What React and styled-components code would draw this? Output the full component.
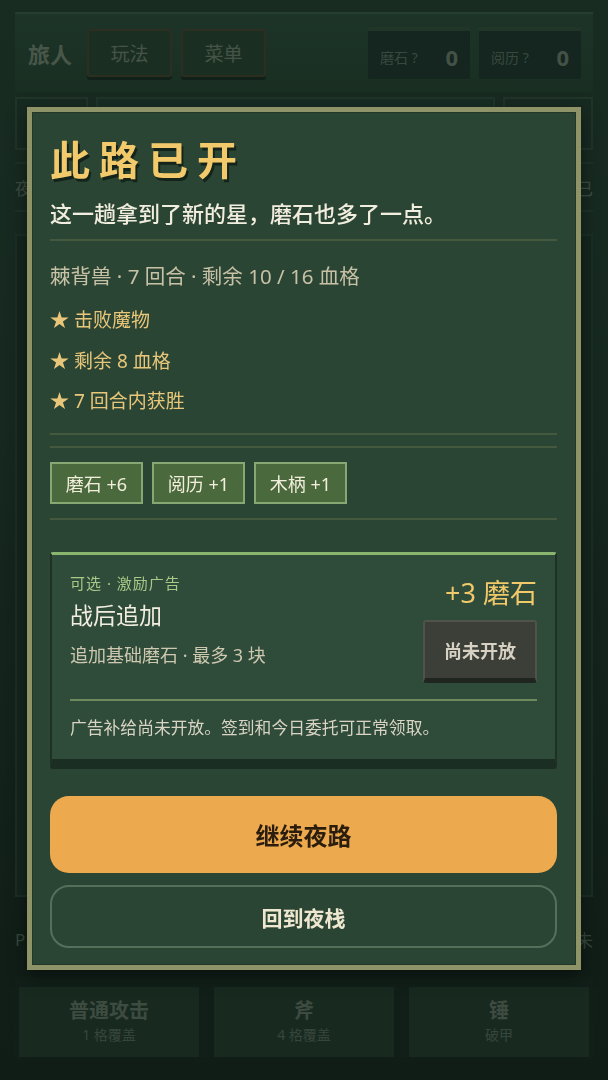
import React from 'react';
import styled, { createGlobalStyle } from 'styled-components';

const GlobalStyle = createGlobalStyle`
  html, body {
    margin: 0;
    padding: 0;
    background: #16241d;
  }
  body {
    font-family: "Noto Sans", "Noto Sans CJK SC", sans-serif;
  }
  * { box-sizing: border-box; }
`;

/* ---------- background game screen (dimmed by the backdrop) ---------- */

const Page = styled.div`
  height: 1080px;
  padding: 12px 15px 23px;
  display: flex;
  flex-direction: column;
  background: linear-gradient(180deg, #30503f 0%, #2a473a 40%, #1f2f27 100%);
  overflow: hidden;
`;

const TopBar = styled.div`
  height: 80px;
  display: flex;
  align-items: center;
  gap: 9px;
  padding: 0 12px 0 13px;
  background: linear-gradient(180deg, #3a604c, #31563f);
  border-top: 2px solid #4a7359;
`;

const Traveler = styled.span`
  font-size: 22px;
  font-weight: 700;
  color: #93a892;
  margin-right: 6px;
`;

const TopButton = styled.div`
  width: 85px;
  height: 48px;
  display: flex;
  align-items: center;
  justify-content: center;
  border: 2px solid #5a5540;
  border-radius: 3px;
  background: #33563f;
  color: #8ea38c;
  font-size: 19px;
  box-shadow: 0 3px 0 #213a2f;
`;

const Spacer = styled.div`
  flex: 1;
`;

const Stat = styled.div`
  width: 102px;
  height: 52px;
  display: flex;
  align-items: center;
  justify-content: space-between;
  padding: 4px 12px 0;
  background: #27443a;
  border-top: 4px solid #42634f;
  border-radius: 2px;
`;

const StatLabel = styled.span`
  font-size: 14px;
  color: #6f8a79;
`;

const StatValue = styled.span`
  font-size: 22px;
  font-weight: 700;
  color: #8a9d8c;
`;

const TabRow = styled.div`
  height: 53px;
  margin-top: 5px;
  display: flex;
  gap: 8px;
`;

const TabBox = styled.div`
  width: ${(p) => p.$w || 72}px;
  border: 2px solid #43624f;
  background: ${(p) => p.$bg || '#2d4c3d'};
  flex: ${(p) => (p.$grow ? 1 : 'none')};
`;

const InfoRow = styled.div`
  height: 50px;
  display: flex;
  align-items: center;
  justify-content: space-between;
  border-top: 2px solid #3c5e4c;
  border-bottom: 2px solid #3c5e4c;
  margin-top: 12px;
  font-size: 17px;
  color: #7d9584;
`;

const Board = styled.div`
  flex: 1;
  margin-top: 22px;
  border: 2px solid #36574a;
  background: #294537;
`;

const HandRow = styled.div`
  height: 56px;
  margin-top: 14px;
  display: flex;
  justify-content: space-between;
  align-items: center;
  font-size: 17px;
  color: #6f8878;
`;

const Tray = styled.div`
  margin-top: 10px;
  padding: 10px 4px 0;
  display: grid;
  grid-template-columns: repeat(3, 1fr);
  gap: 15px;
  background: #22362d;
`;

const Tile = styled.div`
  height: 70px;
  display: flex;
  flex-direction: column;
  align-items: center;
  justify-content: center;
  background: #2f4c3c;
`;

const TileName = styled.span`
  font-size: 20px;
  font-weight: 700;
  color: #7c917f;
  line-height: 26px;
`;

const TileNote = styled.span`
  font-size: 14px;
  color: #6d8474;
  line-height: 22px;
`;

const Backdrop = styled.div`
  position: fixed;
  inset: 0;
  background: rgba(4, 11, 8, 0.52);
`;

/* ---------- result modal ---------- */

const Modal = styled.div`
  position: fixed;
  top: 107px;
  left: 27px;
  width: 554px;
  padding: 22px 19px 17px 18px;
  background: #2b4534;
  border: 5px solid #8e9467;
  box-shadow: inset 0 0 0 1px #22362a, 0 6px 18px rgba(0, 0, 0, 0.45);
`;

const Title = styled.h1`
  margin: 0;
  font-family: "Noto Sans CJK SC", serif;
  font-size: 40px;
  line-height: 48px;
  font-weight: 700;
  letter-spacing: 9px;
  color: #f2c96b;
  text-shadow: 2px 3px 0 #15241a;
`;

const Subtitle = styled.p`
  margin: 16px 0 0;
  font-size: 22px;
  line-height: 30px;
  font-weight: 500;
  color: #f2eedf;
`;

const Rule = styled.div`
  height: 2px;
  background: #45593f;
  margin: ${(p) => p.$m || '0'};
`;

const Meta = styled.p`
  margin: 21px 0 0;
  font-size: 20.5px;
  line-height: 28px;
  color: #c7c1a6;
`;

const StarList = styled.ul`
  list-style: none;
  margin: 16px 0 0;
  padding: 0;
  display: flex;
  flex-direction: column;
  gap: 12.5px;
`;

const Star = styled.li`
  font-size: 19px;
  line-height: 28px;
  color: #e8c77a;
`;

const Chips = styled.div`
  display: flex;
  gap: 9px;
  margin: 14px 0;
`;

const Chip = styled.span`
  height: 42px;
  min-width: 93px;
  padding: 0 11px;
  display: flex;
  align-items: center;
  justify-content: center;
  background: #4a6a3e;
  border: 2px solid #87a872;
  font-size: 18px;
  color: #f3eedc;
`;

const AdCard = styled.div`
  margin-top: 32px;
  background: #2f4b3a;
  border-top: 3px solid #8ab56f;
  border-left: 2px solid #1d3127;
  border-right: 2px solid #1d3127;
  border-bottom: 10px solid #1b2e23;
  border-radius: 3px;
  padding: 16px 18px 18px;
`;

const AdTop = styled.div`
  display: flex;
  justify-content: space-between;
  align-items: flex-start;
`;

const AdText = styled.div`
  display: flex;
  flex-direction: column;
`;

const AdTag = styled.span`
  font-size: 15px;
  line-height: 24px;
  letter-spacing: 1px;
  color: #a8c987;
`;

const AdTitle = styled.span`
  font-size: 23px;
  line-height: 34px;
  margin-top: 3px;
  color: #f1ede0;
`;

const AdDesc = styled.span`
  font-size: 18px;
  line-height: 28px;
  margin-top: 9px;
  color: #cdc8b0;
`;

const AdSide = styled.div`
  display: flex;
  flex-direction: column;
  align-items: flex-end;
`;

const AdAmount = styled.span`
  font-size: 27px;
  line-height: 36px;
  margin-top: 4px;
  color: #f0c96a;
`;

const LockedButton = styled.div`
  width: 114px;
  height: 63px;
  margin-top: 9px;
  display: flex;
  align-items: center;
  justify-content: center;
  background: #3c3e38;
  border: 2px solid #4f534b;
  border-bottom: 5px solid #1f2620;
  border-radius: 3px;
  font-size: 18px;
  font-weight: 700;
  color: #d6d1c2;
`;

const AdRule = styled.div`
  height: 2px;
  background: #6c8a5b;
  margin-top: 16px;
`;

const AdFoot = styled.p`
  margin: 14px 0 0;
  font-size: 16.8px;
  line-height: 26px;
  color: #d9d4c4;
`;

const PrimaryButton = styled.button`
  display: block;
  width: 100%;
  height: 77px;
  margin-top: 27px;
  border: none;
  border-radius: 19px;
  background: #eda94d;
  font-family: inherit;
  font-size: 24px;
  font-weight: 700;
  color: #2a1d0e;
`;

const GhostButton = styled.button`
  display: block;
  width: 100%;
  height: 63px;
  margin-top: 12px;
  border: 2px solid #566f5b;
  border-radius: 19px;
  background: transparent;
  font-family: inherit;
  font-size: 21px;
  font-weight: 700;
  color: #efe8d0;
`;

const tools = [
  { name: '普通攻击', note: '1 格覆盖' },
  { name: '斧', note: '4 格覆盖' },
  { name: '锤', note: '破甲' },
];

const stars = ['★ 击败魔物', '★ 剩余 8 血格', '★ 7 回合内获胜'];
const rewards = ['磨石 +6', '阅历 +1', '木柄 +1'];

export default function App() {
  return (
    <>
      <GlobalStyle />
      <Page>
        <TopBar>
          <Traveler>旅人</Traveler>
          <TopButton>玩法</TopButton>
          <TopButton>菜单</TopButton>
          <Spacer />
          <Stat>
            <StatLabel>磨石 ?</StatLabel>
            <StatValue>0</StatValue>
          </Stat>
          <Stat>
            <StatLabel>阅历 ?</StatLabel>
            <StatValue>0</StatValue>
          </Stat>
        </TopBar>
        <TabRow>
          <TabBox $w={73} />
          <TabBox $grow $bg="#2f5346" />
          <TabBox $w={90} />
        </TabRow>
        <InfoRow>
          <span>夜路</span>
          <span>已</span>
        </InfoRow>
        <Board />
        <HandRow>
          <span>P</span>
          <span>未</span>
        </HandRow>
        <Tray>
          {tools.map((t) => (
            <Tile key={t.name}>
              <TileName>{t.name}</TileName>
              <TileNote>{t.note}</TileNote>
            </Tile>
          ))}
        </Tray>
      </Page>
      <Backdrop />
      <Modal>
        <Title>此路已开</Title>
        <Subtitle>这一趟拿到了新的星，磨石也多了一点。</Subtitle>
        <Rule $m="11px 0 0" />
        <Meta>棘背兽 · 7 回合 · 剩余 10 / 16 血格</Meta>
        <StarList>
          {stars.map((s) => (
            <Star key={s}>{s}</Star>
          ))}
        </StarList>
        <Rule $m="18px 0 0" />
        <Rule $m="11px 0 0" />
        <Chips>
          {rewards.map((r) => (
            <Chip key={r}>{r}</Chip>
          ))}
        </Chips>
        <Rule />
        <AdCard>
          <AdTop>
            <AdText>
              <AdTag>可选 · 激励广告</AdTag>
              <AdTitle>战后追加</AdTitle>
              <AdDesc>追加基础磨石 · 最多 3 块</AdDesc>
            </AdText>
            <AdSide>
              <AdAmount>+3 磨石</AdAmount>
              <LockedButton>尚未开放</LockedButton>
            </AdSide>
          </AdTop>
          <AdRule />
          <AdFoot>广告补给尚未开放。签到和今日委托可正常领取。</AdFoot>
        </AdCard>
        <PrimaryButton>继续夜路</PrimaryButton>
        <GhostButton>回到夜栈</GhostButton>
      </Modal>
    </>
  );
}
